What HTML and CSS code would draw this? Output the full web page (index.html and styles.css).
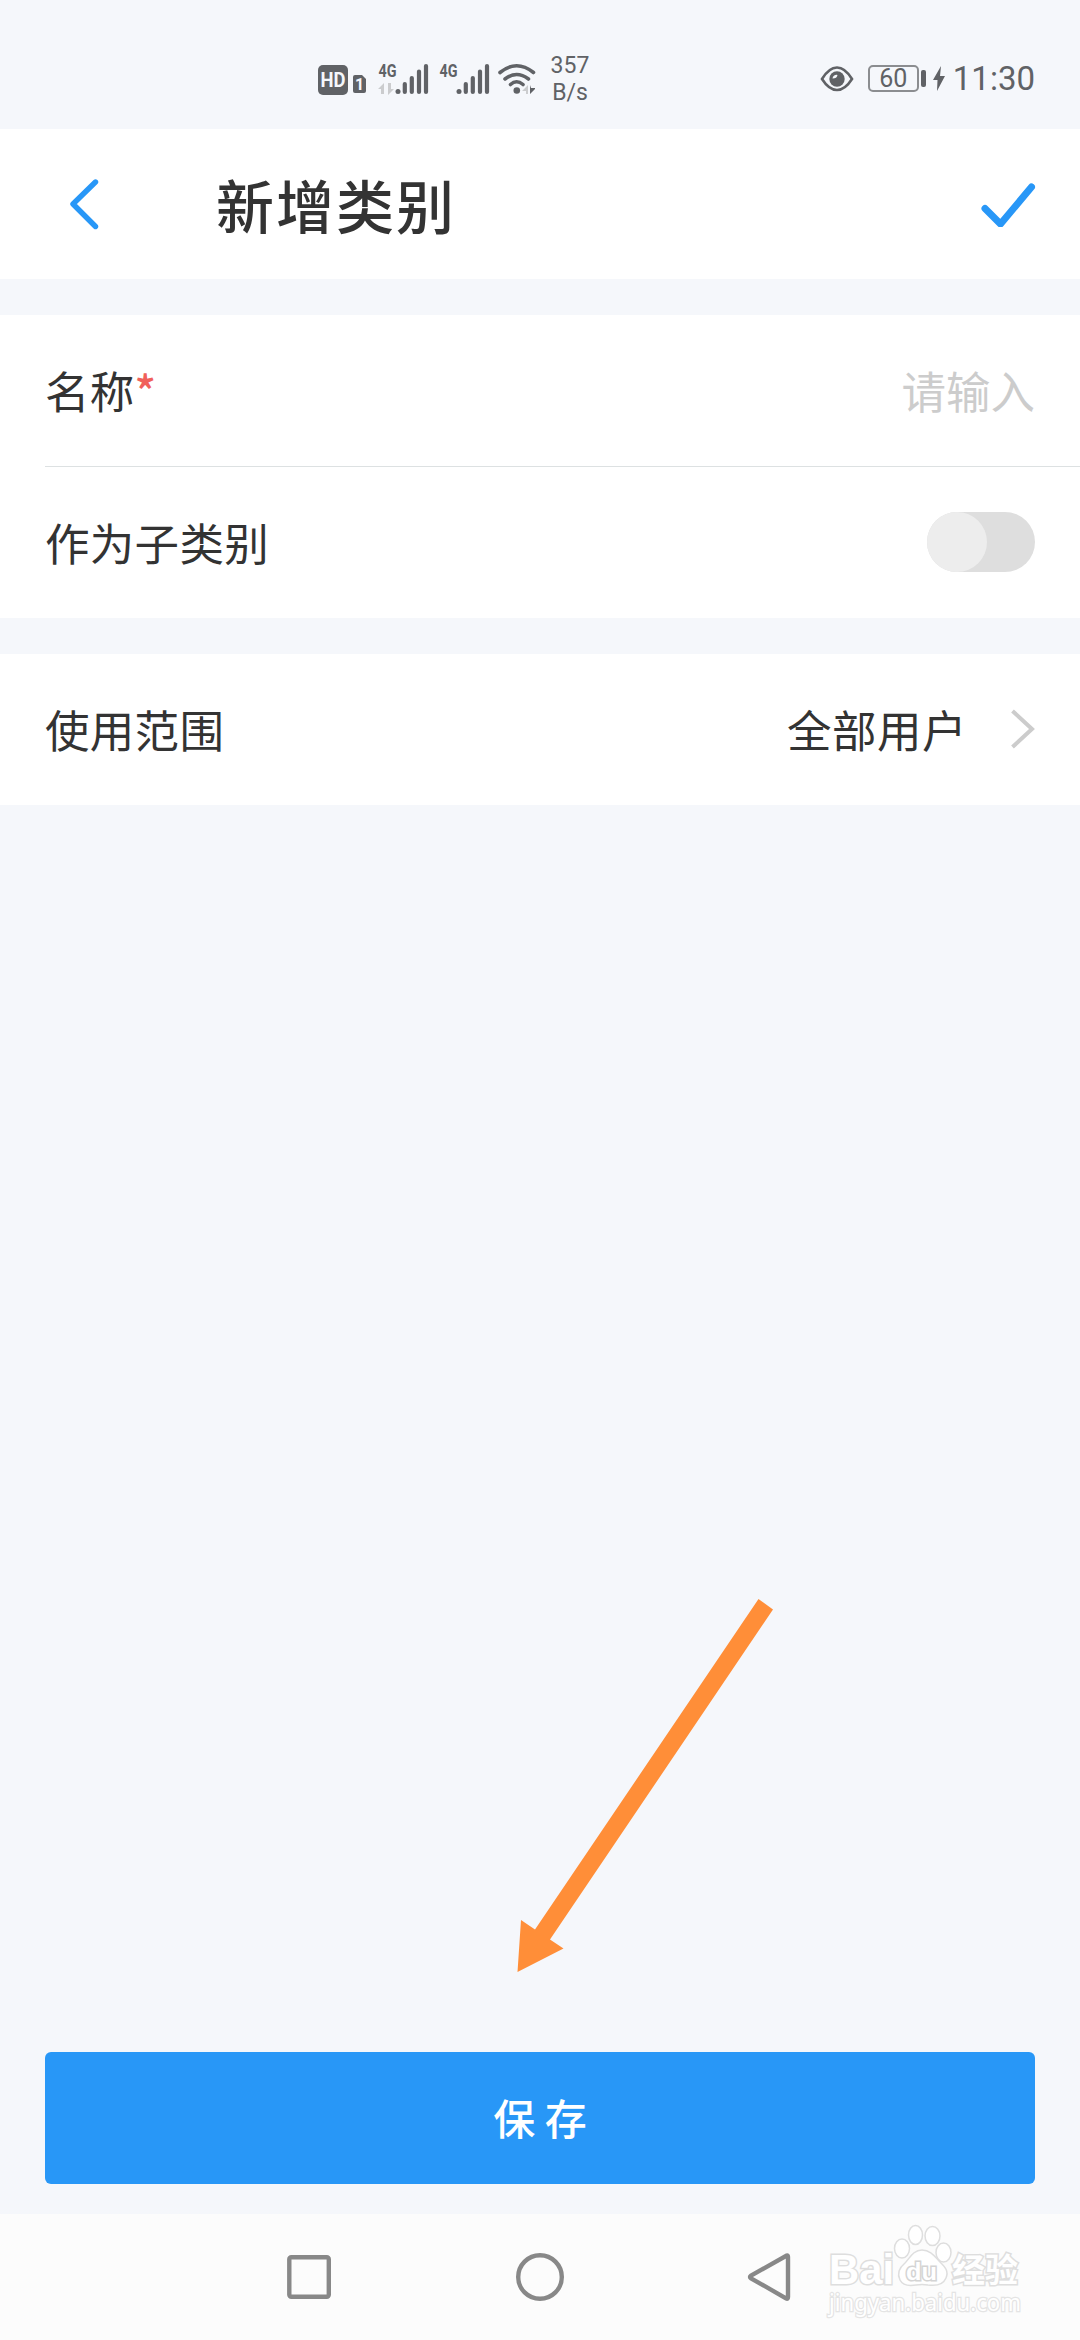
FILE: index.html
```html
<!DOCTYPE html>
<html lang="zh-CN">
<head>
  <meta charset="UTF-8">
  <title>新增类别</title>
  <link rel="stylesheet" href="styles.css">
</head>
<body>
  <div class="page">
    <div class="status-bar">
      <svg class="signal-icons" width="218" height="40" viewBox="318 58 218 40">
        <rect class="dark" x="318" y="64" width="30" height="30" rx="5"/>
        <text class="hd" x="320.5" y="86" textLength="25" lengthAdjust="spacingAndGlyphs">HD</text>
        <path class="dark" d="M353 76q0-2 2-2h7l4 4v12q0 2-2 2h-9q-2 0-2-2z"/>
        <text class="sim" x="355" y="89">1</text>

        <text class="net" x="378.5" y="76.3" textLength="18" lengthAdjust="spacingAndGlyphs">4G</text>
        <path class="light" d="M384 82v11h-3v-5h-3zM388 82h3v6h3l-6 6z"/>
        <g id="bars">
          <circle class="dark" cx="398" cy="90.5" r="2.5"/>
          <path class="bar" d="M404.8 83v8M411.8 77v14M419 70.500v20.500M426 65v26"/>
        </g>
        <text class="net" x="439.500" y="76.3" textLength="18" lengthAdjust="spacingAndGlyphs">4G</text>
        <use href="#bars" x="61"/>

        <path class="wave" d="M500 71.500Q516.500 58 533.500 71.500M505 78Q516.500 69 528.500 78M510.500 83.500Q516.500 78 523 83.500"/>
        <circle class="dark" cx="516.800" cy="89.500" r="3.300"/>
        <path class="light" d="M528 84v9h-2v-3h-4z"/>
        <path class="dark" d="M530 84l1 3h4v1l-5 5z"/>
      </svg>
      <div class="speed">357<br>B/s</div>
      <svg class="eye" width="34" height="28" viewBox="0 0 34 28">
        <path d="M2 14Q9 2.500 17 2.500T32 14Q25 25 17 25T2 14z" fill="none" stroke="#606266" stroke-width="2.600"/>
        <circle cx="17" cy="14" r="7.700" fill="#606266"/>
        <path d="M12.500 13.500a4 4 0 0 1 5-3.500q-.5 3.500-5 3.500z" fill="#f5f7fb"/>
      </svg>
      <div class="battery">60</div>
      <div class="battery-tip"></div>
      <svg class="bolt" width="12" height="25" viewBox="0 0 12 25">
        <path d="M8 0L0 14h4.500L4 25l8-15H7z" fill="#606266"/>
      </svg>
      <div class="time">11:30</div>
    </div>

    <div class="header">
      <svg width="30" height="52" viewBox="0 0 30 52">
        <path class="blue-line" d="M25.500 4L3 26L25.500 48.500" stroke-width="5.400"/>
      </svg>
      <h1>新增类别</h1>
      <svg class="check" width="56" height="46" viewBox="0 0 56 46">
        <path class="blue-line" d="M4 27.500L19.500 43L50.500 6" stroke-width="7"/>
      </svg>
    </div>

    <div class="group">
      <div class="row">
        <span class="label">名称<span class="required">*</span></span>
        <span class="placeholder">请输入</span>
      </div>
      <div class="line"></div>
      <div class="row">
        <span class="label">作为子类别</span>
        <div class="switch"><div class="knob"></div></div>
      </div>
    </div>

    <div class="group">
      <div class="row">
        <span class="label">使用范围</span>
        <span class="value">全部用户</span>
        <svg width="25" height="40" viewBox="0 0 25 40">
          <path d="M2.500 2L22 20L2.500 38" fill="none" stroke="#ccc" stroke-width="4"/>
        </svg>
      </div>
    </div>

    <button class="save">保 存</button>

    <div class="nav-bar">
      <svg width="50" height="50" viewBox="0 0 50 50">
        <rect x="5.300" y="5.300" width="39.500" height="39.500" rx="2"/>
      </svg>
      <svg width="50" height="50" viewBox="0 0 50 50">
        <circle cx="25" cy="25" r="21.800"/>
      </svg>
      <svg width="50" height="50" viewBox="0 0 50 50">
        <path d="M40.700 3.500Q42 3 42 5V45Q42 47.500 40 46.300L5 26.300Q3 25 5 23.700z"/>
      </svg>
    </div>

    <svg class="arrow" width="262" height="378" viewBox="514 1597 262 378">
      <path d="M758.500 1599L773 1609.500L550 1939.500L563.500 1948.500L517.500 1972L521 1920L535 1929.500z" fill="#ff8e38"/>
    </svg>

    <svg class="watermark" width="206" height="100" viewBox="822 2220 206 100">
      <text class="logo" x="829" y="2284" textLength="65" lengthAdjust="spacingAndGlyphs">Bai</text>
      <ellipse cx="902" cy="2248.500" rx="7.500" ry="9.500"/>
      <ellipse cx="915.500" cy="2235" rx="7" ry="9.500"/>
      <ellipse cx="932.500" cy="2236" rx="7.500" ry="9.500"/>
      <ellipse cx="943.500" cy="2252.500" rx="7.500" ry="9.500"/>
      <path d="M922 2250c-9 0-12 8-17 13-6 5-8 11-5 17s10 6 16 5q6-1 12 0c7 1 15 0 18-7s-1-11-6-16-9-12-18-12z"/>
      <text class="du" x="906" y="2280" textLength="31" lengthAdjust="spacingAndGlyphs">du</text>
      <text class="cn" x="952" y="2282" textLength="66">经验</text>
      <text class="url" x="829" y="2311" textLength="192" lengthAdjust="spacingAndGlyphs">jingyan.baidu.com</text>
    </svg>
  </div>
</body>
</html>
```
FILE: styles.css
```css
* {
  box-sizing: border-box;
}

body {
  margin: 0;
  background-color: #f5f7fb;
  color: #333;
  font-family: "Noto Sans CJK SC", sans-serif;
}

svg {
  display: block;
  flex: none;
}

.page {
  position: relative;
  display: flex;
  flex-direction: column;
  width: 1080px;
  height: 2340px;
  overflow: hidden;
}

/* status bar */
.status-bar {
  display: flex;
  align-items: center;
  height: 129px;
  padding: 28px 45px 0 318px;
  color: #606266;
  font-family: Roboto, sans-serif;
}

.dark {
  fill: #606266;
}

.light {
  fill: #cbccce;
}

.bar,
.wave {
  fill: none;
  stroke: #606266;
  stroke-width: 4.2;
  stroke-linecap: round;
}

.wave {
  stroke-width: 3.6;
}

.hd {
  fill: #f5f7fb;
  font-size: 20px;
  font-weight: bold;
}

.sim {
  fill: #f5f7fb;
  font-size: 16px;
  font-weight: bold;
}

.net {
  fill: #606266;
  font-size: 19px;
  font-weight: bold;
}

.speed {
  width: 42px;
  margin-left: 13px;
  padding-top: 1px;
  font-size: 23px;
  line-height: 27px;
  text-align: center;
}

.eye {
  margin-left: auto;
}

.battery {
  width: 51px;
  height: 27px;
  margin-left: 14px;
  border: 2px solid #8b8d90;
  border-radius: 5px;
  font-size: 25px;
  line-height: 24px;
  text-align: center;
}

.battery-tip {
  width: 5px;
  height: 17px;
  margin-left: 2px;
  border-radius: 2px;
  background-color: #606266;
}

.bolt {
  margin-left: 7px;
}

.time {
  margin-left: 8px;
  font-size: 33px;
  line-height: 40px;
}

/* title */
.header {
  display: flex;
  align-items: center;
  height: 150px;
  padding: 0 43px 0 70px;
  background-color: #fff;
}

.header h1 {
  margin: 0 0 0 116px;
  font-size: 58px;
  font-weight: 500;
  line-height: 80px;
  letter-spacing: 2px;
}

.check {
  margin-left: auto;
}

.blue-line {
  fill: none;
  stroke: #2897f7;
  stroke-linecap: round;
  stroke-linejoin: round;
}

/* form rows */
.group {
  margin-top: 36px;
  background-color: #fff;
}

.row {
  display: flex;
  align-items: center;
  justify-content: space-between;
  height: 151px;
  padding: 0 45px 2px;
  font-size: 44.500px;
  line-height: 66px;
}

.label {
  letter-spacing: 0.3px;
}

.line {
  height: 1px;
  margin-left: 45px;
  background-color: #dde1e2;
}

.required {
  color: #f0605a;
  font-weight: 500;
}

.placeholder {
  color: #ccc;
}

.value {
  margin: 0 43px 0 auto;
  letter-spacing: 0.5px;
}

.switch {
  width: 108px;
  height: 60px;
  border-radius: 30px;
  background-color: #dedede;
}

.knob {
  width: 60px;
  height: 60px;
  border-radius: 50%;
  background-color: #ededed;
}

.save {
  height: 132px;
  margin: auto 45px 30px;
  padding: 0 0 3px;
  border: none;
  border-radius: 6px;
  background-color: #2897f7;
  color: #fff;
  font-family: inherit;
  font-size: 42px;
  font-weight: 500;
}

/* system navigation */
.nav-bar {
  display: flex;
  align-items: center;
  gap: 181px;
  height: 126px;
  padding-left: 284px;
  background-color: #fcfcfc;
}

.nav-bar svg {
  fill: none;
  stroke: #888;
  stroke-width: 4.400;
}

.arrow {
  position: absolute;
  left: 514px;
  top: 1597px;
}

.watermark {
  position: absolute;
  left: 822px;
  top: 2220px;
  fill: #fff;
  stroke: #dedede;
  stroke-width: 1.500;
}

.watermark text {
  paint-order: stroke;
  stroke-width: 3;
}

.watermark .logo {
  font-family: "Liberation Sans", sans-serif;
  font-size: 43px;
  font-weight: bold;
}

.watermark .du {
  font-family: "Liberation Sans", sans-serif;
  font-size: 24px;
  font-weight: bold;
  stroke: #d4d4d4;
}

.watermark .cn {
  font-size: 33px;
  font-weight: bold;
}

.watermark .url {
  font-family: "Noto Sans", sans-serif;
  font-size: 23px;
  stroke: #e4e4e4;
  stroke-width: 2.5;
}
```
